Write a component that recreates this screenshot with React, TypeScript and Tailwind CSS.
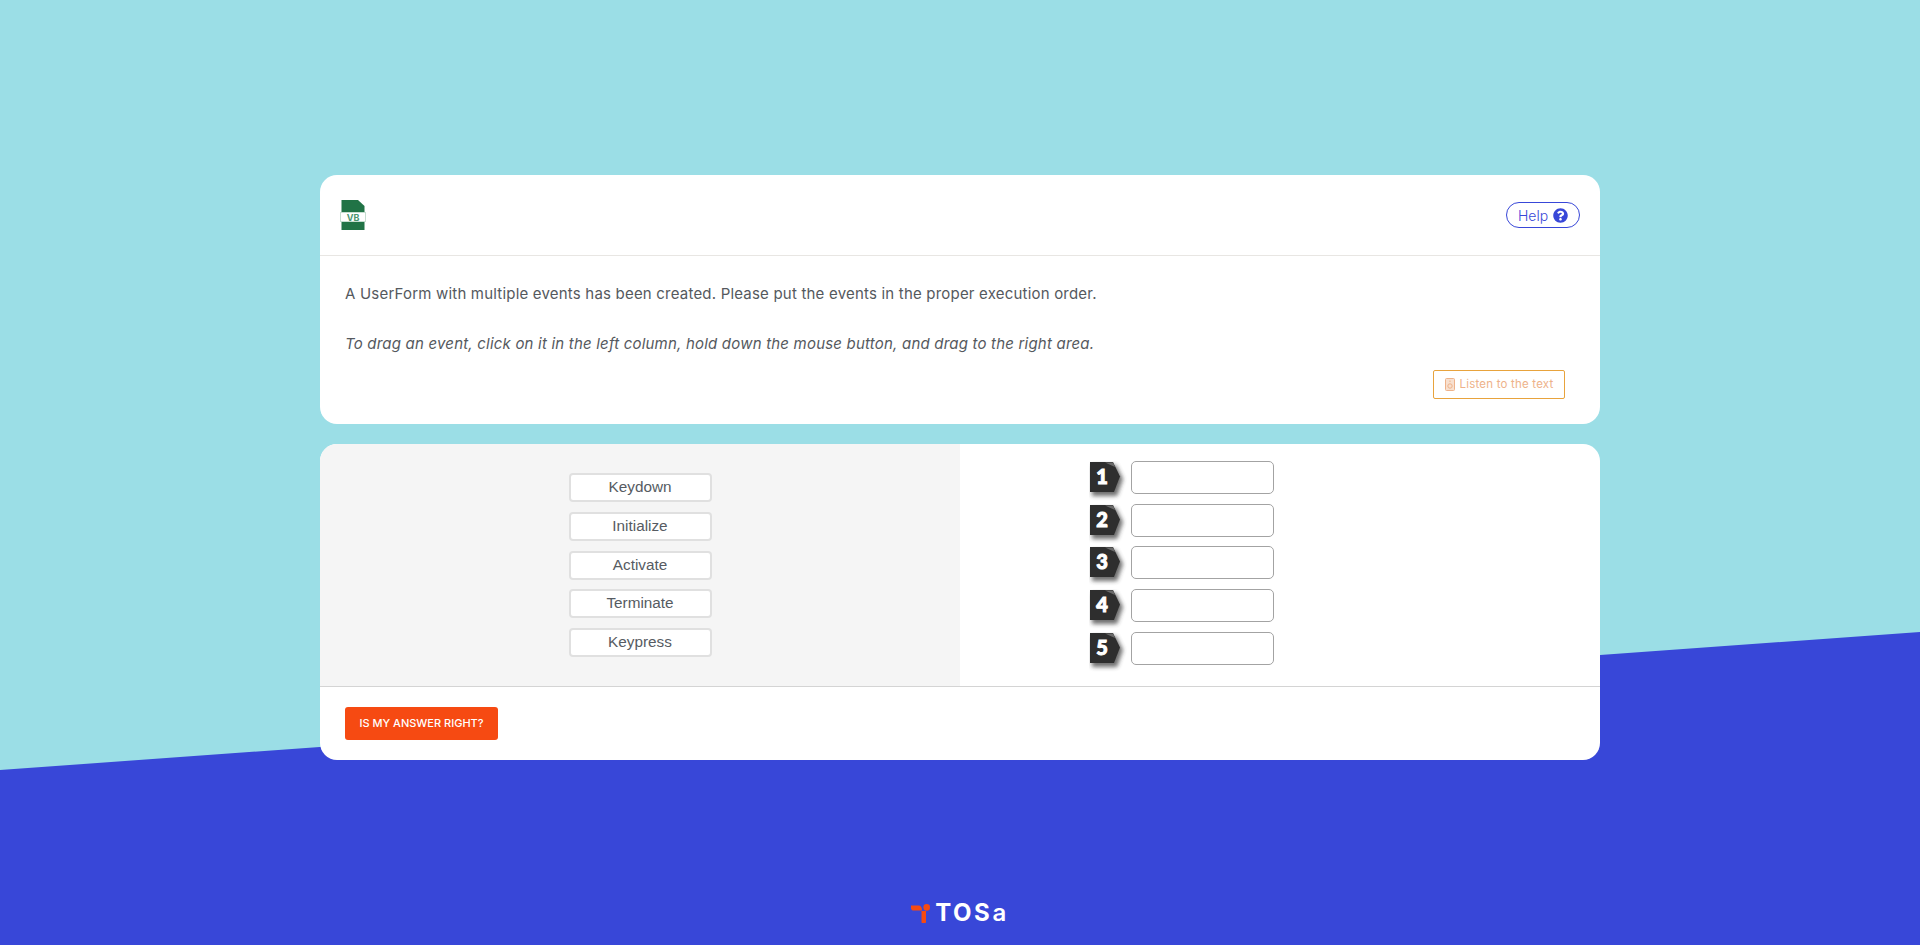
import { FaQuestionCircle } from "react-icons/fa";

const events = ["Keydown", "Initialize", "Activate", "Terminate", "Keypress"];
const slots = [1, 2, 3, 4, 5];

function VbIcon() {
  return (
    <svg width="26" height="30" viewBox="0 0 26 30" className="block">
      <path d="M1.5 0H18L24.5 6V30H1.5Z" fill="#217346" />
      <rect x="0.5" y="12.5" width="25" height="9" fill="#fff" stroke="#c6ddd0" />
      <text x="13" y="20.5" textAnchor="middle" fontSize="9" fontWeight="700" fill="#4c9670" fontFamily="Inter, sans-serif">
        VB
      </text>
    </svg>
  );
}

function SpeakerIcon() {
  return (
    <svg width="10" height="13" viewBox="0 0 10 13" fill="#f8e0cf" stroke="#eeb28a" className="block">
      <rect x="0.5" y="0.5" width="9" height="12" rx="1" />
      <circle cx="5" cy="8" r="2.2" />
      <path d="M5 2.5V4" />
    </svg>
  );
}

function NumberBadge({ n }: { n: number }) {
  return (
    <div className="relative h-[33px] w-[34px] shrink-0">
      <svg width="40" height="40" viewBox="0 0 40 40" className="block">
        <defs>
          <filter id={`shade${n}`} x="-30%" y="-30%" width="170%" height="170%">
            <feGaussianBlur stdDeviation="2.2" />
          </filter>
        </defs>
        <path d="M3 4H27L34 18L28 35H3Z" fill="#333" opacity="0.7" filter={`url(#shade${n})`} />
        <path d="M1 1H24L31 15.5L25 31H1Z" fill="#2e2e2e" />
        <path d="M16 1.5H24L26 6Z" fill="#6a6a6a" />
      </svg>
      <span className="absolute left-0 top-[-1px] w-[26px] text-center font-['Lato',sans-serif] text-[20px] leading-[33px] font-black text-white [-webkit-text-stroke:1px_white]">
        {n}
      </span>
    </div>
  );
}

export default function App() {
  return (
    <div className="relative flex h-[945px] flex-col items-center overflow-hidden bg-[#9bdee6] pt-[175px] font-['Inter',sans-serif]">
      <div className="absolute inset-0 bg-[#3847d8] [clip-path:polygon(0_770px,1920px_632px,1920px_945px,0_945px)]" />

      <div className="relative w-[1280px] rounded-[17px] bg-white">
        <div className="flex h-[81px] items-start justify-between border-b border-[#e8e6e3] pt-[25px] pr-[20px] pl-[20px]">
          <VbIcon />
          <button className="mt-[2px] flex h-[26px] w-[74px] items-center justify-center gap-[5px] rounded-full border border-[#3847d8] bg-white text-[14px] font-light text-[#3847d8]">
            Help
            <FaQuestionCircle className="text-[15px]" />
          </button>
        </div>
        <div className="h-[168px] px-[25px] pt-[27px] text-[15px] tracking-[0.2px] text-[#55595e]">
          <p className="leading-[22px]">
            A UserForm with multiple events has been created. Please put the events in the proper execution order.
          </p>
          <p className="mt-[28px] leading-[22px] italic">
            To drag an event, click on it in the left column, hold down the mouse button, and drag to the right area.
          </p>
          <div className="mt-[15px] flex justify-end pr-[10px]">
            <button className="flex h-[29px] w-[132px] items-center justify-center gap-[5px] rounded-[2px] border border-[#e8a33d] text-[11.5px] text-[#eeb28a]">
              <SpeakerIcon />
              Listen to the text
            </button>
          </div>
        </div>
      </div>

      <div className="relative mt-[20px] w-[1280px] overflow-hidden rounded-[17px] bg-white">
        <div className="flex h-[243px] border-b border-[#d4d4d4]">
          <div className="flex w-[640px] flex-col items-center gap-[9.75px] bg-[#f5f5f5] pt-[29px]">
            {events.map((e) => (
              <div
                key={e}
                className="flex h-[29px] w-[143px] items-center justify-center rounded-[4px] border-2 border-[#e0e0e0] bg-white font-['Liberation_Sans',sans-serif] text-[15.3px] text-[#565b62]"
              >
                {e}
              </div>
            ))}
          </div>
          <div className="flex flex-1 flex-col gap-[9.7px] pt-[17px] pl-[129px]">
            {slots.map((n) => (
              <div key={n} className="flex items-start gap-[8px]">
                <NumberBadge n={n} />
                <div className="h-[33px] w-[143px] rounded-[5px] border border-[#a3a3a3] bg-white" />
              </div>
            ))}
          </div>
        </div>
        <div className="h-[73px] px-[25px] pt-[20px]">
          <button className="h-[33px] w-[153px] rounded-[3px] bg-[#f64a12] text-[11px] font-medium text-white">
            IS MY ANSWER RIGHT?
          </button>
        </div>
      </div>

      <div className="relative mt-[141px] flex items-center gap-[5px]">
        <svg width="19" height="19" viewBox="0 0 19 19" className="block">
          <path d="M0 1.5H7.5C10 1.5 11 3.5 11 6.5H8C7.5 6.5 7 6.5 6 6.5H1.5L0 5Z" fill="#f64a12" />
          <path d="M10.5 7H15V18C15 18.6 14.6 19 14 19H11.5C10.9 19 10.5 18.6 10.5 18Z" fill="#f64a12" />
          <circle cx="15.7" cy="3.4" r="3.3" fill="#f64a12" />
        </svg>
        <span className="text-[24px] leading-[24px] font-bold tracking-[2.6px] text-white">
          TOS<span className="font-semibold">a</span>
        </span>
      </div>
    </div>
  );
}
